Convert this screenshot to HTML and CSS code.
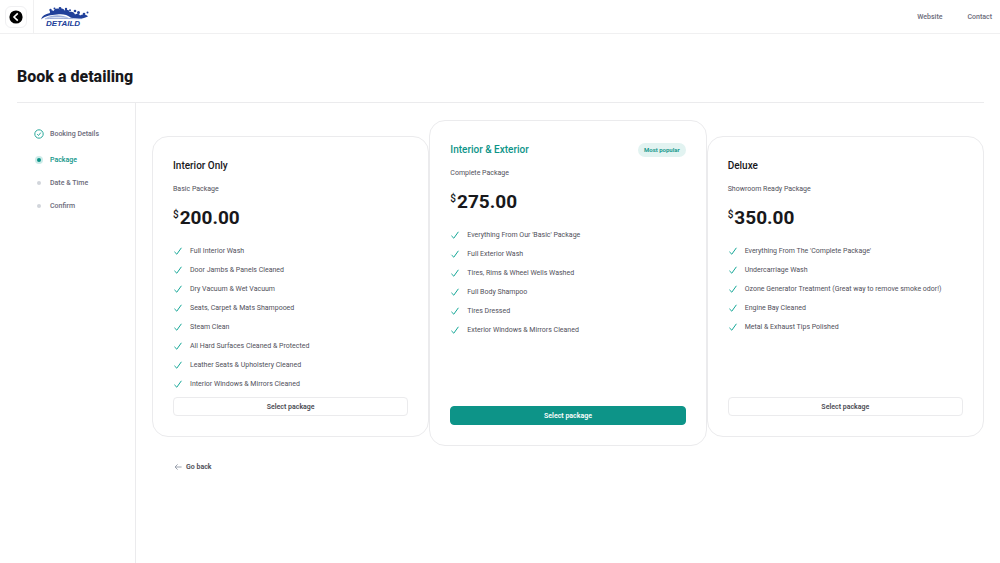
FILE: index.html
```html
<!DOCTYPE html>
<html lang="en">
<head>
  <meta charset="UTF-8">
  <meta name="viewport" content="width=device-width, initial-scale=1">
  <title>Detaild - Book a detailing</title>
  <link rel="stylesheet" href="styles.css">
</head>
<body>
  <!-- Shared icons -->
  <svg class="sprite" aria-hidden="true">
    <symbol id="icon-check" viewBox="0 0 10 10">
      <path d="M1.4 5.8 L3.8 8.2 L8.4 1.8" />
    </symbol>
  </svg>

  <header class="header">
    <div class="back-cell">
      <button type="button" class="back-button" aria-label="Back">
        <svg viewBox="0 0 14 14" aria-hidden="true">
          <circle cx="7" cy="7" r="6.6" fill="#000" />
          <path d="M8.8 3.4 L5 7 L8.8 10.6" fill="none" stroke="#fff" stroke-width="1.6" />
        </svg>
      </button>
    </div>
    <a href="#" class="logo" aria-label="Detaild">
      <svg viewBox="0 -2 50 24" aria-hidden="true">
        <g fill="#21409a">
          <path d="M1 12.400 C2 9 5 7 10 6 C9 3.500 12 2.500 13.500 4 C15 1 18 0.800 19.500 2.500 C21 0.600 24 1.500 24.500 3.500 C26.500 2 29.500 3 29.500 5 C32 4 34.500 5.500 35 7.500 C37 6 39.500 6.800 40 8.600 C42 7 46 7.200 48 9.500 C46 10 45 11 42 11.400 C38 11.600 34 11.300 31 10.800 C27 7.500 22 6.800 17 7.600 C11 8 5 9 1 12.400 Z" />
          <circle cx="10.500" cy="3" r="1.200" />
          <circle cx="14.500" cy="1.500" r="1" />
          <circle cx="20" cy="1.400" r="1.400" />
          <circle cx="26" cy="2" r="1.200" />
          <circle cx="30" cy="3.200" r="1" />
          <circle cx="35" cy="4" r="1.300" />
          <circle cx="38.500" cy="5.500" r="1.500" />
          <circle cx="44" cy="7" r="1.300" />
          <circle cx="47.500" cy="5.600" r="1" />
        </g>
        <path d="M6 11 C12 7.600 22 7.400 29 11 C22 10 13 10 6 11 Z" fill="#9dafdb" />
        <path d="M5 11.800 C16 10.800 32 12 42 11.600" fill="none" stroke="#5b76bf" stroke-width="0.600" />
        <text class="logo-text" x="6" y="19">DETAILD</text>
      </svg>
    </a>
    <nav class="nav">
      <a href="#">Website</a>
      <a href="#">Contact</a>
    </nav>
  </header>

  <main class="page">
    <h1>Book a detailing</h1>

    <div class="booking">
      <ol class="steps">
        <li class="step done">
          <svg class="step-icon" viewBox="0 0 10 10" aria-hidden="true">
            <circle cx="5" cy="5" r="4.200" />
            <path d="M3.200 5.200 L4.500 6.500 L6.800 3.600" />
          </svg>
          <a href="#">Booking Details</a>
        </li>
        <li class="step current"><span class="dot"></span><a href="#" aria-current="step">Package</a></li>
        <li class="step"><span class="dot"></span><a href="#">Date &amp; Time</a></li>
        <li class="step"><span class="dot"></span><a href="#">Confirm</a></li>
      </ol>

      <div class="content">
        <div class="packages">
          <section class="card">
            <div class="card-head">
              <h2>Interior Only</h2>
            </div>
            <p class="subtitle">Basic Package</p>
            <p class="price"><span class="currency">$</span>200.00</p>
            <ul class="features">
              <li><svg class="check"><use href="#icon-check" /></svg>Full Interior Wash</li>
              <li><svg class="check"><use href="#icon-check" /></svg>Door Jambs &amp; Panels Cleaned</li>
              <li><svg class="check"><use href="#icon-check" /></svg>Dry Vacuum &amp; Wet Vacuum</li>
              <li><svg class="check"><use href="#icon-check" /></svg>Seats, Carpet &amp; Mats Shampooed</li>
              <li><svg class="check"><use href="#icon-check" /></svg>Steam Clean</li>
              <li><svg class="check"><use href="#icon-check" /></svg>All Hard Surfaces Cleaned &amp; Protected</li>
              <li><svg class="check"><use href="#icon-check" /></svg>Leather Seats &amp; Upholstery Cleaned</li>
              <li><svg class="check"><use href="#icon-check" /></svg>Interior Windows &amp; Mirrors Cleaned</li>
            </ul>
            <button type="button" class="select">Select package</button>
          </section>

          <section class="card popular">
            <div class="card-head">
              <h2>Interior &amp; Exterior</h2>
              <span class="badge">Most popular</span>
            </div>
            <p class="subtitle">Complete Package</p>
            <p class="price"><span class="currency">$</span>275.00</p>
            <ul class="features">
              <li><svg class="check"><use href="#icon-check" /></svg>Everything From Our 'Basic' Package</li>
              <li><svg class="check"><use href="#icon-check" /></svg>Full Exterior Wash</li>
              <li><svg class="check"><use href="#icon-check" /></svg>Tires, Rims &amp; Wheel Wells Washed</li>
              <li><svg class="check"><use href="#icon-check" /></svg>Full Body Shampoo</li>
              <li><svg class="check"><use href="#icon-check" /></svg>Tires Dressed</li>
              <li><svg class="check"><use href="#icon-check" /></svg>Exterior Windows &amp; Mirrors Cleaned</li>
            </ul>
            <button type="button" class="select">Select package</button>
          </section>

          <section class="card">
            <div class="card-head">
              <h2>Deluxe</h2>
            </div>
            <p class="subtitle">Showroom Ready Package</p>
            <p class="price"><span class="currency">$</span>350.00</p>
            <ul class="features">
              <li><svg class="check"><use href="#icon-check" /></svg>Everything From The 'Complete Package'</li>
              <li><svg class="check"><use href="#icon-check" /></svg>Undercarriage Wash</li>
              <li><svg class="check"><use href="#icon-check" /></svg>Ozone Generator Treatment (Great way to remove smoke odor!)</li>
              <li><svg class="check"><use href="#icon-check" /></svg>Engine Bay Cleaned</li>
              <li><svg class="check"><use href="#icon-check" /></svg>Metal &amp; Exhaust Tips Polished</li>
            </ul>
            <button type="button" class="select">Select package</button>
          </section>
        </div>

        <button type="button" class="go-back">
          <svg viewBox="0 0 8 8" aria-hidden="true">
            <path d="M7.600 4 H1 M3.600 1.400 L1 4 L3.600 6.600" />
          </svg>
          Go back
        </button>
      </div>
    </div>
  </main>
</body>
</html>
```

FILE: styles.css
```css
* {
  box-sizing: border-box;
}

body {
  margin: 0;
  min-height: 100vh;
  display: flex;
  flex-direction: column;
  font-family: Roboto, "Liberation Sans", sans-serif;
  font-size: 7px;
  line-height: 12px;
  color: #50505a;
  background: #fff;
}

h1,
h2,
p,
ul,
ol {
  margin: 0;
  padding: 0;
}

ul,
ol {
  list-style: none;
}

a {
  color: inherit;
  text-decoration: none;
}

button {
  font-family: inherit;
  font-size: 7px;
  line-height: 12px;
  font-weight: 600;
  color: #4a4a52;
  background: #fff;
  cursor: pointer;
}

.sprite {
  position: absolute;
  width: 0;
  height: 0;
}

/* Header */
.header {
  display: flex;
  align-items: center;
  height: 34px;
  padding-right: 8px;
  border-bottom: 1px solid #f0f0f1;
}

.back-cell {
  display: flex;
  align-items: center;
  height: 100%;
  padding: 0 6px 0 5px;
  border-right: 1px solid #f0f0f1;
}

.back-button {
  display: flex;
  padding: 3px;
  border: 1px solid #f0f0f2;
  border-radius: 6px;
}

.back-button svg {
  width: 14px;
  height: 14px;
}

.logo {
  margin-left: 6px;
}

.logo svg {
  display: block;
  width: 50px;
  height: 24px;
  overflow: visible;
}

.logo-text {
  font-family: "Liberation Sans", sans-serif;
  font-size: 8px;
  font-weight: 700;
  font-style: italic;
  fill: #21409a;
}

.nav {
  display: flex;
  gap: 25px;
  margin-left: auto;
  font-weight: 500;
  color: #6b6b7a;
}

/* Page */
.page {
  flex: 1;
  display: flex;
  flex-direction: column;
  padding: 32px 16px 0 17px;
}

h1 {
  padding-bottom: 15px;
  border-bottom: 1px solid #ebebed;
  font-size: 16px;
  line-height: 21px;
  font-weight: 800;
  color: #18181b;
}

.booking {
  flex: 1;
  display: flex;
}

/* Steps */
.steps {
  display: flex;
  flex-direction: column;
  gap: 11px;
  width: 119px;
  padding: 25px 0 0 17px;
  border-right: 1px solid #ebebed;
  font-weight: 500;
  color: #6b6b7a;
}

.step {
  display: flex;
  align-items: center;
  gap: 6px;
}

.step.done {
  margin-bottom: 3px;
}

.step.current {
  color: #0d9488;
}

.step-icon {
  width: 10px;
  height: 10px;
  fill: none;
  stroke: #2aa99c;
}

.dot {
  width: 4px;
  height: 4px;
  margin: 0 3px;
  border-radius: 50%;
  background: #d1d5db;
}

.current .dot {
  background: #0d9488;
  box-shadow: 0 0 0 2px #ccebe8;
}

/* Packages */
.content {
  flex: 1;
  padding: 33px 0 24px 16px;
}

.packages {
  display: grid;
  grid-template-columns: repeat(3, 1fr);
}

.card {
  display: flex;
  flex-direction: column;
  padding: 20px;
  border: 1px solid #ebebed;
  border-radius: 16px;
  background: #fff;
}

.card.popular {
  margin: -16px 0 -9px;
}

.card-head {
  display: flex;
  align-items: center;
  justify-content: space-between;
  height: 18px;
}

h2 {
  font-size: 10px;
  line-height: 18px;
  font-weight: 500;
  color: #18181b;
}

.popular h2 {
  color: #0d9488;
}

.badge {
  padding: 1px 6px;
  border-radius: 7px;
  font-size: 6px;
  font-weight: 600;
  color: #0d9488;
  background: #e2f3f1;
}

.subtitle {
  margin-top: 8px;
}

.price {
  display: flex;
  margin-top: 10px;
  font-size: 19px;
  line-height: 26px;
  font-weight: 700;
  color: #18181b;
}

.currency {
  margin-right: 1px;
  font-size: 10px;
  line-height: 20px;
  font-weight: 500;
}

.features {
  display: flex;
  flex-direction: column;
  gap: 7px;
  margin: 14px 0 7px;
}

.features li {
  display: flex;
  align-items: center;
  gap: 7px;
}

.check {
  width: 10px;
  height: 10px;
  fill: none;
  stroke: #14a797;
}

.select {
  height: 19px;
  margin-top: auto;
  padding: 0;
  border: 1px solid #ebebed;
  border-radius: 4px;
}

.popular .select {
  border-color: #0d9488;
  color: #fff;
  background: #0d9488;
}

.go-back {
  display: flex;
  align-items: center;
  gap: 4px;
  margin: 24px 0 0 22px;
  padding: 0;
  border: 0;
}

.go-back svg {
  width: 8px;
  height: 8px;
  fill: none;
  stroke: #9ca3af;
}
```
